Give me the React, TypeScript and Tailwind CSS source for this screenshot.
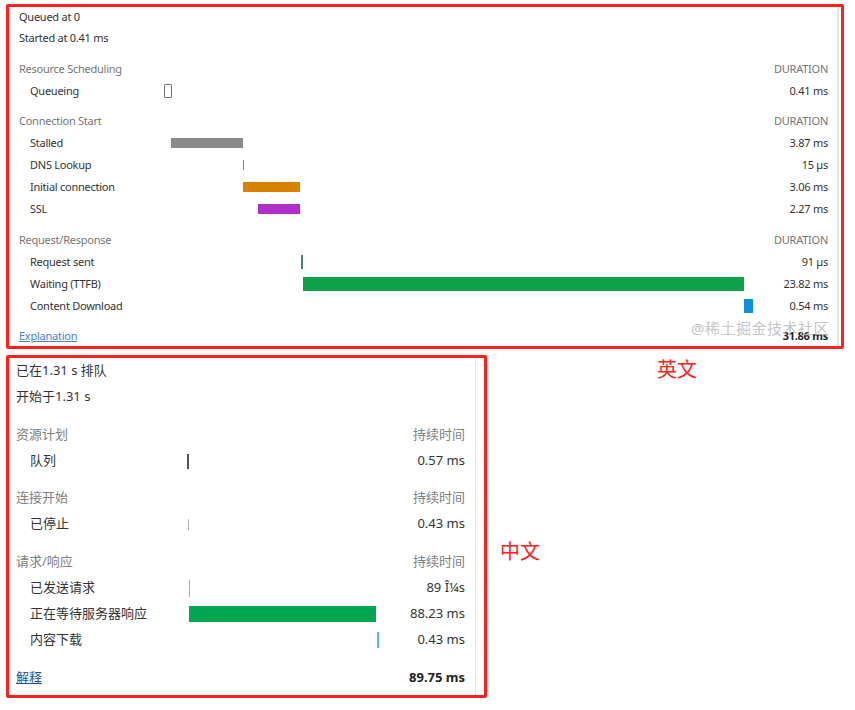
import React from "react";

type Bar = { ml: number; w: number; h: number; color: string; hollow?: boolean };
type Row = { label: string; value: string; bar?: Bar };
type Section = { title: string; rows: Row[] };

const enSections: Section[] = [
  {
    title: "Resource Scheduling",
    rows: [{ label: "Queueing", value: "0.41 ms", bar: { ml: 14, w: 8, h: 14, color: "#777", hollow: true } }],
  },
  {
    title: "Connection Start",
    rows: [
      { label: "Stalled", value: "3.87 ms", bar: { ml: 21, w: 72, h: 10, color: "#8a8a8a" } },
      { label: "DNS Lookup", value: "15 µs", bar: { ml: 93, w: 1, h: 10, color: "#2aa69b" } },
      { label: "Initial connection", value: "3.06 ms", bar: { ml: 93, w: 57, h: 10, color: "#d98200" } },
      { label: "SSL", value: "2.27 ms", bar: { ml: 108, w: 42, h: 10, color: "#b12fc9" } },
    ],
  },
  {
    title: "Request/Response",
    rows: [
      { label: "Request sent", value: "91 µs", bar: { ml: 151, w: 2, h: 14, color: "#4f7e7a" } },
      { label: "Waiting (TTFB)", value: "23.82 ms", bar: { ml: 153, w: 441, h: 14, color: "#0ba24a" } },
      { label: "Content Download", value: "0.54 ms", bar: { ml: 594, w: 9, h: 14, color: "#0f8fdc" } },
    ],
  },
];

const zhSections: Section[] = [
  {
    title: "资源计划",
    rows: [{ label: "队列", value: "0.57 ms", bar: { ml: 7, w: 2, h: 15, color: "#555" } }],
  },
  {
    title: "连接开始",
    rows: [{ label: "已停止", value: "0.43 ms", bar: { ml: 8, w: 1, h: 11, color: "#b0b0b0" } }],
  },
  {
    title: "请求/响应",
    rows: [
      { label: "已发送请求", value: "89 Î¼s", bar: { ml: 9, w: 1, h: 17, color: "#8fb3b8" } },
      { label: "正在等待服务器响应", value: "88.23 ms", bar: { ml: 9, w: 187, h: 16, color: "#02a650" } },
      { label: "内容下载", value: "0.43 ms", bar: { ml: 197, w: 2, h: 16, color: "#5db1e3" } },
    ],
  },
];

function BarView({ bar }: { bar?: Bar }) {
  if (!bar) return null;
  if (bar.hollow) {
    return (
      <div
        className="shrink-0 border border-[#777] rounded-[1px] bg-white"
        style={{ marginLeft: bar.ml, width: bar.w, height: bar.h, borderColor: bar.color }}
      />
    );
  }
  return (
    <div
      className="shrink-0"
      style={{ marginLeft: bar.ml, width: bar.w, height: bar.h, backgroundColor: bar.color }}
    />
  );
}

export default function App() {
  return (
    <div className="w-[855px] h-[710px] bg-white relative overflow-hidden" style={{ fontFamily: '"Noto Sans", "Noto Sans CJK SC", sans-serif' }}>
      {/* English panel */}
      <div className="ml-[6px] mt-[4px] w-[838px] h-[345px] border-[3px] border-[#ff2020] rounded-[2px] box-border relative">
        <div className="h-full mr-[2px] border-r-2 border-[#e2e2e2] pr-[9px] text-[11px] tracking-[-0.25px] text-[#333]">
          <div className="h-[20px] flex items-center pl-[10px]">Queued at 0</div>
          <div className="h-[22px] flex items-center pl-[10px]">Started at 0.41 ms</div>
          {enSections.map((s, i) => (
            <div key={s.title} className={i === 0 ? "mt-[9px]" : i === 1 ? "mt-[8px]" : "mt-[9px]"}>
              <div className="h-[22px] flex items-center justify-between pl-[10px] text-[#757575]">
                <span>{s.title}</span>
                <span>DURATION</span>
              </div>
              {s.rows.map((r) => (
                <div key={r.label} className="h-[22px] flex items-center">
                  <div className="w-[141px] pl-[21px] shrink-0">{r.label}</div>
                  <div className="flex-1 h-full flex items-center">
                    <BarView bar={r.bar} />
                  </div>
                  <div className="w-[70px] text-right shrink-0">{r.value}</div>
                </div>
              ))}
            </div>
          ))}
          <div className="mt-[9px] h-[20px] flex items-center justify-between pl-[10px]">
            <span className="text-[#4a7fc9] underline">Explanation</span>
            <span className="font-bold text-[#222]">31.86 ms</span>
          </div>
        </div>
        <div className="absolute right-[12px] bottom-[7px] text-[15px] text-[#b8b8b8] opacity-80 tracking-[0.5px]">
          @稀土掘金技术社区
        </div>
      </div>

      {/* Chinese panel row */}
      <div className="flex mt-[6px]">
        <div className="ml-[6px] w-[481px] h-[343px] border-[3px] border-[#ff2020] rounded-[2px] box-border shrink-0">
          <div className="h-full mr-[8px] border-r border-[#e5e5e5] pr-[10px] pt-[1px] text-[13px] text-[#333]">
            <div className="h-[24px] flex items-center pl-[7px]">已在1.31 s 排队</div>
            <div className="h-[26px] mt-[1px] flex items-center pl-[7px]">开始于1.31 s</div>
            {zhSections.map((s, i) => (
              <div key={s.title} className={i === 1 ? "mt-[11px]" : "mt-[12px]"}>
                <div className="h-[26px] flex items-center justify-between pl-[7px] text-[#808080]">
                  <span>{s.title}</span>
                  <span>持续时间</span>
                </div>
                {s.rows.map((r) => (
                  <div key={r.label} className="h-[26px] flex items-center">
                    <div className="w-[171px] pl-[21px] shrink-0">{r.label}</div>
                    <div className="flex-1 h-full flex items-center">
                      <BarView bar={r.bar} />
                    </div>
                    <div className="w-[70px] text-right shrink-0">{r.value}</div>
                  </div>
                ))}
              </div>
            ))}
            <div className="mt-[12px] h-[26px] flex items-center justify-between pl-[7px]">
              <span className="text-[#1f4fa0] underline">解释</span>
              <span className="font-bold text-[#222]">89.75 ms</span>
            </div>
          </div>
        </div>
        <div className="flex flex-col items-start">
          <div className="ml-[170px] mt-[4px] text-[20px] leading-[22px] text-[#ff2020]">英文</div>
          <div className="ml-[13px] mt-[160px] text-[20px] leading-[22px] text-[#ff2020]">中文</div>
        </div>
      </div>
    </div>
  );
}
